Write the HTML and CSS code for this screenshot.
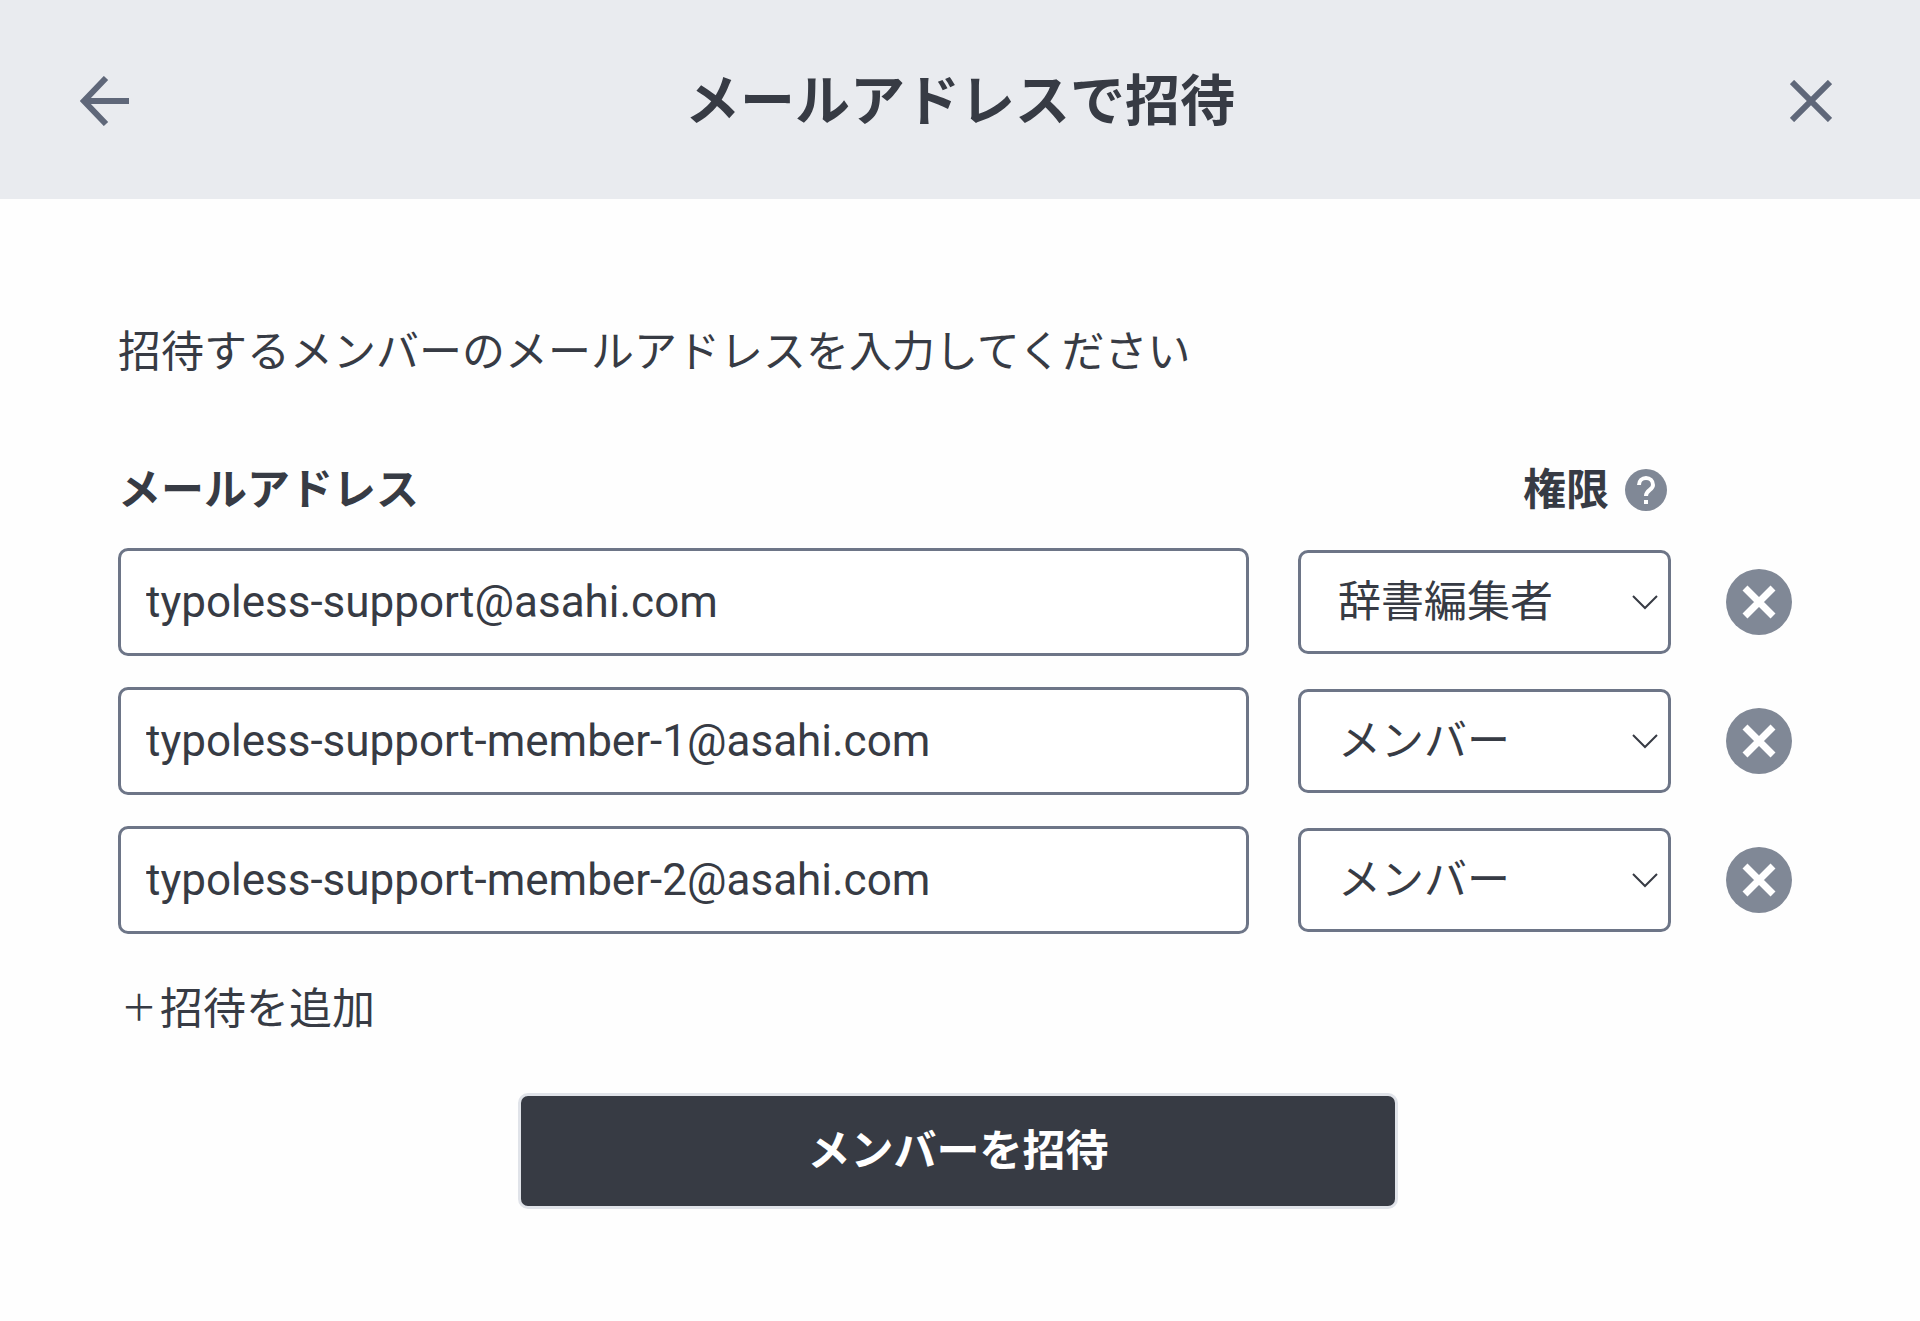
FILE: index.html
```html
<!DOCTYPE html>
<html lang="ja">
<head>
<meta charset="utf-8">
<meta name="viewport" content="width=device-width, initial-scale=1">
<title>メールアドレスで招待</title>
<link rel="stylesheet" href="styles.css">
</head>
<body>
<header class="header">
  <button class="icon-button" type="button" aria-label="戻る">
    <svg width="50" height="50" viewBox="0 0 50 50"><path d="M49 25H5M26 2 4 25l22 23" /></svg>
  </button>
  <h1 class="title">メールアドレスで招待</h1>
  <button class="icon-button" type="button" aria-label="閉じる">
    <svg width="42" height="42" viewBox="0 0 42 42"><path d="M2 2l38 38M40 2 2 40" /></svg>
  </button>
</header>
<main class="content">
  <p class="lead">招待するメンバーのメールアドレスを入力してください</p>
  <form class="form">
    <div class="row labels">
      <span class="label" id="label-mail">メールアドレス</span>
      <span class="label label-role"><span id="label-role">権限</span>
        <button class="help" type="button" aria-label="権限について">
          <svg width="42" height="42" viewBox="0 0 42 42"><circle cx="21" cy="21" r="21" /><path d="M14 16c0-4 3-7 7-7s7 3 7 7c0 5-7 5-7 11" /><rect x="19" y="31" width="4" height="4" /></svg>
        </button>
      </span>
    </div>
    <div class="row">
      <input class="mail" type="email" aria-labelledby="label-mail" value="typoless-support@asahi.com">
      <div class="role">
        <select class="select" aria-labelledby="label-role"><option selected>辞書編集者</option><option>メンバー</option></select>
        <svg class="chevron" width="26" height="15" viewBox="0 0 26 15"><path d="M1 1l12 12L25 1" /></svg>
      </div>
      <button class="remove" type="button" aria-label="削除"><svg width="66" height="66" viewBox="0 0 66 66"><circle cx="33" cy="33" r="33" /><path d="M19 19l28 28M47 19 19 47" /></svg></button>
    </div>
    <div class="row">
      <input class="mail" type="email" aria-labelledby="label-mail" value="typoless-support-member-1@asahi.com">
      <div class="role">
        <select class="select" aria-labelledby="label-role"><option>辞書編集者</option><option selected>メンバー</option></select>
        <svg class="chevron" width="26" height="15" viewBox="0 0 26 15"><path d="M1 1l12 12L25 1" /></svg>
      </div>
      <button class="remove" type="button" aria-label="削除"><svg width="66" height="66" viewBox="0 0 66 66"><circle cx="33" cy="33" r="33" /><path d="M19 19l28 28M47 19 19 47" /></svg></button>
    </div>
    <div class="row">
      <input class="mail" type="email" aria-labelledby="label-mail" value="typoless-support-member-2@asahi.com">
      <div class="role">
        <select class="select" aria-labelledby="label-role"><option>辞書編集者</option><option selected>メンバー</option></select>
        <svg class="chevron" width="26" height="15" viewBox="0 0 26 15"><path d="M1 1l12 12L25 1" /></svg>
      </div>
      <button class="remove" type="button" aria-label="削除"><svg width="66" height="66" viewBox="0 0 66 66"><circle cx="33" cy="33" r="33" /><path d="M19 19l28 28M47 19 19 47" /></svg></button>
    </div>
    <button class="add" type="button"><span class="plus">＋</span>招待を追加</button>
    <button class="submit" type="submit">メンバーを招待</button>
  </form>
</main>
</body>
</html>
```
FILE: styles.css
```css
* {
  box-sizing: border-box;
}

body {
  margin: 0;
  background: #fefefe;
  color: #373b44;
  font-family: Roboto, "Noto Sans CJK JP", sans-serif;
  font-size: 43px;
  line-height: 60px;
}

button,
input,
select {
  margin: 0;
  padding: 0;
  border: 0;
  background: none;
  color: inherit;
  font: inherit;
}

button {
  cursor: pointer;
}

svg {
  display: block;
  fill: none;
}

.header {
  display: flex;
  align-items: center;
  justify-content: space-between;
  padding: 61px 88px 58px 80px;
  background: #e9ebef;
}

.icon-button svg {
  stroke: #5f6779;
  stroke-width: 6;
}

.title {
  margin: 0;
  font-size: 55px;
  font-weight: 700;
  line-height: 80px;
}

.content {
  padding: 123px 122px 110px 118px;
}

.lead {
  margin: 0 0 78px;
}

.form {
  display: flex;
  flex-direction: column;
}

.row {
  display: grid;
  grid-template-columns: 1fr 373px 72px;
  column-gap: 49px;
  align-items: center;
  margin-bottom: 31px;
  padding-right: 6px;
}

.row.labels {
  margin-bottom: 28px;
}

.label {
  font-weight: 700;
}

.label-role {
  display: flex;
  align-items: center;
  justify-content: flex-end;
  gap: 16px;
  padding-right: 4px;
}

.help circle,
.remove circle {
  fill: #808896;
}

.help path {
  stroke: #fff;
  stroke-width: 4;
}

.help rect {
  fill: #fff;
}

.mail,
.select {
  width: 100%;
  border: 3px solid #6d7587;
  border-radius: 10px;
  background: #fff;
}

.mail {
  height: 108px;
  padding: 0 25px;
  font-size: 44px;
}

.role {
  display: grid;
  align-items: center;
}

.select,
.chevron {
  grid-area: 1 / 1;
}

.select {
  height: 104px;
  padding: 0 48px 0 37px;
  appearance: none;
}

.chevron {
  justify-self: end;
  margin-right: 13px;
  stroke: #373b44;
  stroke-width: 2;
  pointer-events: none;
}

.remove {
  justify-self: end;
}

.remove path {
  stroke: #fff;
  stroke-width: 7;
}

.add {
  display: flex;
  align-self: flex-start;
  align-items: center;
  margin: 14px 0 54px;
}

.plus {
  width: 42px;
  font-size: 36px;
  text-align: center;
}

.submit {
  align-self: center;
  width: 100%;
  max-width: 880px;
  height: 116px;
  border: 3px solid #e0e3e9;
  border-radius: 10px;
  background: #373b44;
  color: #fff;
  font-weight: 700;
}
```
